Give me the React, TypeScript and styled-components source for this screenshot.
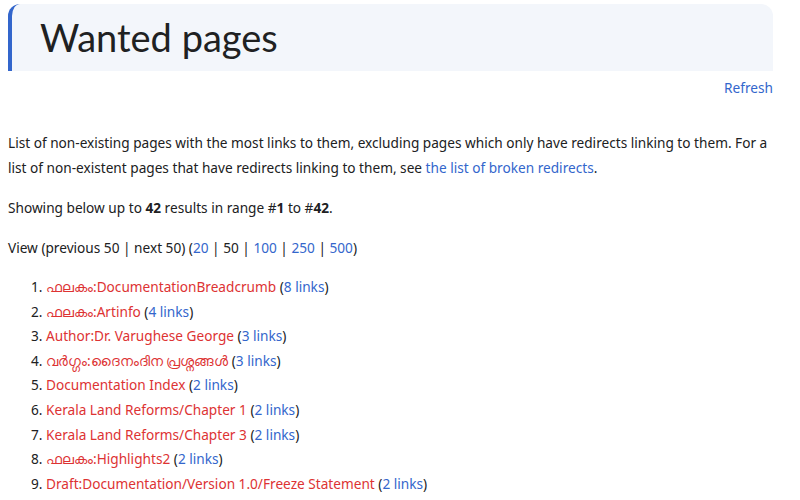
import styled, { createGlobalStyle } from 'styled-components'

const Global = createGlobalStyle`
  body {
    margin: 0;
    background: #fff;
    font-family: "Noto Sans", "Open Sans", sans-serif;
    color: #202122;
  }
`

const Page = styled.div`
  padding: 4px 22px 0 8px;
  font-size: 13.65px;
  line-height: 25px;
`

const Heading = styled.div`
  display: flex;
  align-items: center;
  height: 67px;
  margin-right: 5px;
  background: #f3f6fb;
  border-left: 4px solid #3366cc;
  border-radius: 12px 12px 0 0;
  padding-left: 28px;
`

const Title = styled.h1`
  margin: 0;
  font-family: "Lato", "DejaVu Sans", sans-serif;
  font-weight: 400;
  font-size: 38px;
  color: #202122;
`

const Tools = styled.div`
  display: flex;
  justify-content: flex-end;
  margin-top: 4px;
  margin-right: 5px;
`

const Link = styled.a<{ $missing?: boolean }>`
  color: ${(p) => (p.$missing ? '#dd3333' : '#3366cc')};
  text-decoration: none;
`

const Para = styled.p`
  margin: 30px 0 0;
  & + & {
    margin-top: 15px;
  }
`

const List = styled.ol`
  margin: 15px 0 0;
  padding-left: 38px;
  line-height: 24.6px;
`

const Item = styled.li``

const pages = [
  ['ഫലകം:DocumentationBreadcrumb', 8],
  ['ഫലകം:Artinfo', 4],
  ['Author:Dr. Varughese George', 3],
  ['വർഗ്ഗം:ദൈനംദിന പ്രശ്നങ്ങൾ', 3],
  ['Documentation Index', 2],
  ['Kerala Land Reforms/Chapter 1', 2],
  ['Kerala Land Reforms/Chapter 3', 2],
  ['ഫലകം:Highlights2', 2],
  ['Draft:Documentation/Version 1.0/Freeze Statement', 2],
] as const

const App = () => {
  return (
    <>
      <Global />
      <Page>
        <Heading>
          <Title>Wanted pages</Title>
        </Heading>
        <Tools>
          <Link href="#">Refresh</Link>
        </Tools>
        <Para>
          List of non-existing pages with the most links to them, excluding pages which only have
          redirects linking to them. For a list of non-existent pages that have redirects linking
          to them, see <Link href="#">the list of broken redirects</Link>.
        </Para>
        <Para>
          Showing below up to <b>42</b> results in range #<b>1</b> to #<b>42</b>.
        </Para>
        <Para>
          View (previous 50 | next 50) (<Link href="#">20</Link> | 50 | <Link href="#">100</Link> |{' '}
          <Link href="#">250</Link> | <Link href="#">500</Link>)
        </Para>
        <List>
          {pages.map(([name, n]) => (
            <Item key={name}>
              <Link href="#" $missing>{name}</Link> (<Link href="#">{n} links</Link>)
            </Item>
          ))}
        </List>
      </Page>
    </>
  )
}

export default App
